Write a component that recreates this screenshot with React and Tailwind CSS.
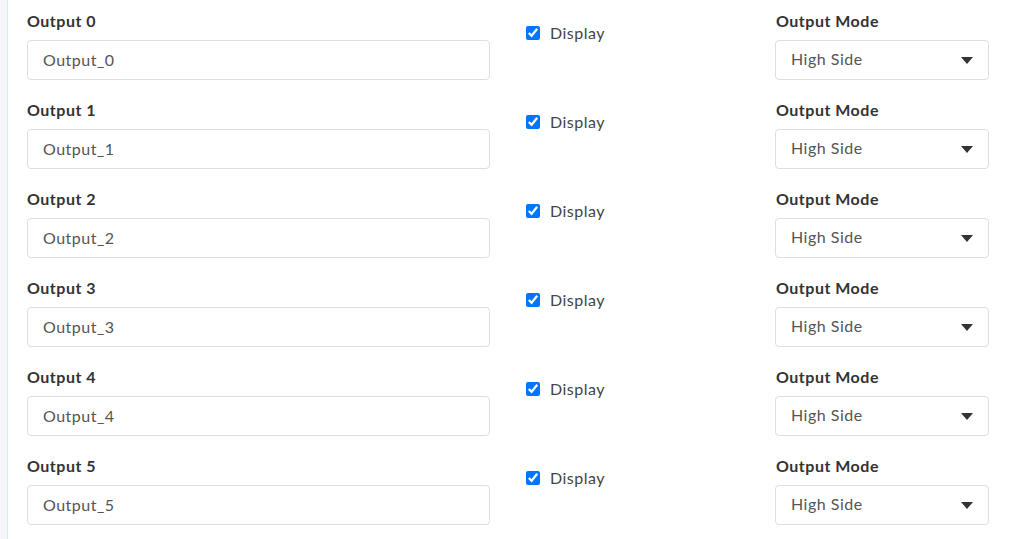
import { useState } from "react";

const outputs = [0, 1, 2, 3, 4, 5];

const Caret = () => (
  <svg width="12" height="7" viewBox="0 0 12 7" className="shrink-0">
    <path d="M0 0 L12 0 L6 7 Z" fill="#333" />
  </svg>
);

const OutputRow = ({ index }) => {
  const [shown, setShown] = useState(true);
  return (
    <div className="flex">
      <div className="w-[463px] flex flex-col">
        <label className="h-6 leading-6 text-[16px] font-bold text-[#333]">Output {index}</label>
        <input
          defaultValue={`Output_${index}`}
          className="mt-[7px] h-10 px-[15px] pb-px border border-[#dcdfe3] rounded-[4px] text-[16px] tracking-[0.5px] text-[#555] outline-none"
        />
      </div>
      <div className="ml-[36px] w-[249px] pt-[12px]">
        <label className="flex items-center h-6 gap-[10px] text-[16px] text-[#444]">
          <input
            type="checkbox"
            checked={shown}
            onChange={() => setShown(!shown)}
            className="m-0 w-[14px] h-[14px] accent-[#0075ff]"
          />
          Display
        </label>
      </div>
      <div className="w-[214px] flex flex-col">
        <label className="h-6 leading-6 text-[16px] font-bold text-[#333] pl-px">Output Mode</label>
        <div className="mt-[7px] h-10 pl-[15px] pr-[15px] pb-[3px] border border-[#dcdfe3] rounded-[4px] flex items-center justify-between text-[16px] text-[#555]">
          <span>High Side</span>
          <span className="pt-[3px] flex">
            <Caret />
          </span>
        </div>
      </div>
    </div>
  );
};

const App = () => {
  return (
    <div
      className="w-[1024px] h-[539px] overflow-hidden flex bg-white tracking-[0.5px]"
      style={{ fontFamily: "Lato, 'Noto Sans', sans-serif" }}
    >
      <div className="w-[7px] bg-[#f4f6f8] shrink-0" />
      <div className="w-px bg-[#d5ebf2] shrink-0" />
      <div className="flex-1 pl-[19px] pt-[9px] flex flex-col gap-[18px]">
        {outputs.map((i) => (
          <OutputRow key={i} index={i} />
        ))}
      </div>
    </div>
  );
};

export default App;
